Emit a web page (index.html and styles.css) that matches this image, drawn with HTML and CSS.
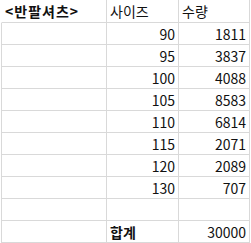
FILE: index.html
```html
<!DOCTYPE html>
<html lang="ko">
<head>
<meta charset="utf-8">
<link rel="stylesheet" href="styles.css">
</head>
<body>
<div class="sheet">
  <div class="cell head first bold title">&lt;반팔셔츠&gt;</div>
  <div class="cell head">사이즈</div>
  <div class="cell head">수량</div>

  <div class="cell first"></div><div class="cell num">90</div><div class="cell num">1811</div>
  <div class="cell first"></div><div class="cell num">95</div><div class="cell num">3837</div>
  <div class="cell first"></div><div class="cell num">100</div><div class="cell num">4088</div>
  <div class="cell first"></div><div class="cell num">105</div><div class="cell num">8583</div>
  <div class="cell first"></div><div class="cell num">110</div><div class="cell num">6814</div>
  <div class="cell first"></div><div class="cell num">115</div><div class="cell num">2071</div>
  <div class="cell first"></div><div class="cell num">120</div><div class="cell num">2089</div>
  <div class="cell first"></div><div class="cell num">130</div><div class="cell num">707</div>
  <div class="cell first"></div><div class="cell"></div><div class="cell"></div>
  <div class="cell first"></div><div class="cell bold">합계</div><div class="cell num">30000</div>
</div>
</body>
</html>
```
FILE: styles.css
```css
html, body {
  margin: 0;
  padding: 0;
  background: #ffffff;
}
.sheet {
  display: grid;
  grid-template-columns: 106px 72px 71px;
  grid-template-rows: 23px;
  grid-auto-rows: 22px;
  margin-left: 1px;
  font-family: "Noto Sans CJK KR", "Noto Sans", sans-serif;
  font-size: 14px;
  color: #111111;
}
.cell {
  box-sizing: border-box;
  border-right: 1px solid #d9d9d9;
  border-bottom: 1px solid #d9d9d9;
  line-height: 22px;
  padding: 0 3px;
  white-space: nowrap;
  overflow: hidden;
}
.first {
  border-left: 1px solid #d9d9d9;
}
.head {
  line-height: 23px;
}
.head.first {
  border-left-color: transparent;
}
.title {
  letter-spacing: 1px;
}
.num {
  text-align: right;
}
.bold {
  font-weight: bold;
}
```
